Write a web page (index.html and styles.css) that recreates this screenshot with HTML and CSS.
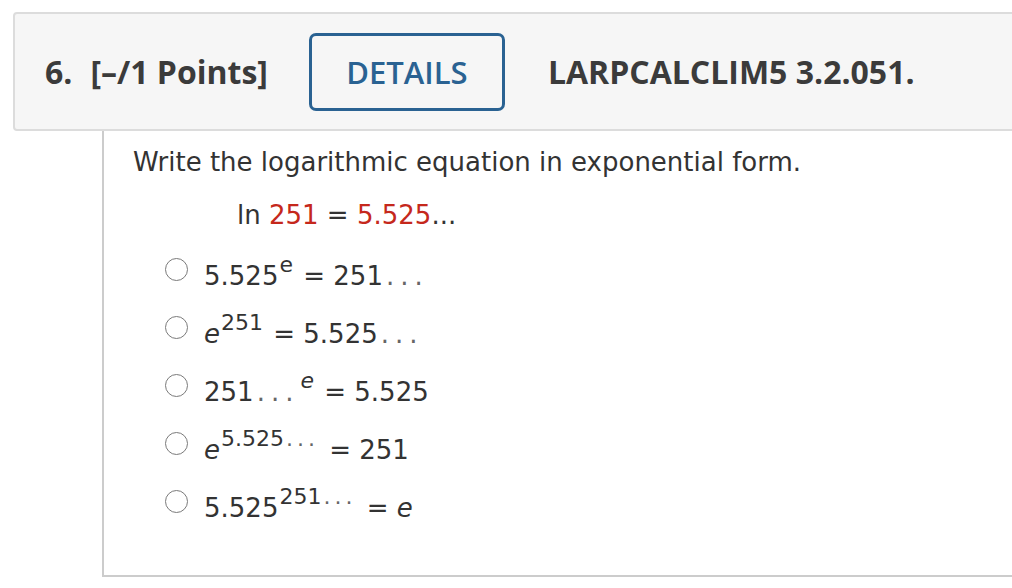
FILE: index.html
```html
<!DOCTYPE html>
<html>
<head>
<meta charset="utf-8">
<link rel="stylesheet" href="styles.css">
</head>
<body>
<div class="page">
  <div class="qhead">
    <span class="qnum">6.</span>
    <span class="qpts">[–/1 Points]</span>
    <span class="details">DETAILS</span>
    <span class="qref">LARPCALCLIM5 3.2.051.</span>
  </div>
  <div class="qbody">
    <p class="prompt">Write the logarithmic equation in exponential form.</p>
    <p class="given">ln <span class="red">251</span> = <span class="red">5.525</span>...</p>
    <ul class="opts">
      <li><span class="radio"></span><span class="expr">5.525<sup>e</sup> = 251<span class="dots">...</span></span></li>
      <li><span class="radio"></span><span class="expr"><i>e</i><sup>251</sup> = 5.525<span class="dots">...</span></span></li>
      <li><span class="radio"></span><span class="expr">251<span class="dots">...</span><sup><i>e</i></sup> = 5.525</span></li>
      <li><span class="radio"></span><span class="expr"><i>e</i><sup>5.525<span class="dots">...</span></sup> = 251</span></li>
      <li><span class="radio"></span><span class="expr">5.525<sup>251<span class="dots">...</span></sup> = <i>e</i></span></li>
    </ul>
  </div>
</div>
</body>
</html>
```

FILE: styles.css
```css
html, body {
  margin: 0;
  padding: 0;
  background: #fff;
  overflow: hidden;
}
.page {
  width: 1012px;
  height: 588px;
  overflow: hidden;
  padding-top: 12px;
  box-sizing: border-box;
}
.qhead {
  margin-left: 13px;
  width: 1100px;
  height: 119px;
  box-sizing: border-box;
  border: 2px solid #dcdcdc;
  border-radius: 4px;
  background: #f6f6f6;
  display: flex;
  align-items: center;
  padding-left: 30px;
  font-family: "Open Sans", sans-serif;
  font-weight: 700;
  font-size: 32px;
  color: #3b3b3b;
}
.qnum {
  margin-right: 18px;
}
.qpts {
  margin-right: 41px;
}
.details {
  display: flex;
  align-items: center;
  justify-content: center;
  width: 196px;
  height: 78px;
  box-sizing: border-box;
  border: 3px solid #2a6292;
  border-radius: 7px;
  color: #2a6292;
  font-weight: 600;
  font-size: 31px;
  margin-right: 43px;
}
.qbody {
  margin-left: 102px;
  width: 1000px;
  height: 446px;
  box-sizing: border-box;
  border-left: 2px solid #cccccc;
  border-bottom: 2px solid #cccccc;
  padding-left: 29px;
  padding-top: 13px;
  font-family: "DejaVu Sans", Verdana, sans-serif;
  font-size: 26px;
  color: #333;
}
.prompt {
  margin: 0;
  line-height: 36px;
}
.given {
  margin: 17px 0 0 104px;
  line-height: 36px;
}
.red {
  color: #c5281c;
}
.opts {
  list-style: none;
  margin: 11px 0 0 32px;
  padding: 0;
}
.opts li {
  display: flex;
  align-items: center;
  height: 58px;
}
.radio {
  width: 23px;
  height: 23px;
  box-sizing: border-box;
  border: 1.5px solid #7a7a7a;
  border-radius: 50%;
  margin-right: 16px;
  margin-top: -8px;
}
.expr {
  line-height: 36px;
  padding-top: 6px;
}
.expr sup {
  font-size: 22px;
  line-height: 0;
  vertical-align: 13px;
  margin-left: 1px;
  margin-right: 2px;
}
.dots {
  letter-spacing: 6px;
  color: #666;
  margin-left: 3px;
}
sup .dots {
  letter-spacing: 4px;
  margin-left: 2px;
}
i {
  font-style: italic;
}
```
